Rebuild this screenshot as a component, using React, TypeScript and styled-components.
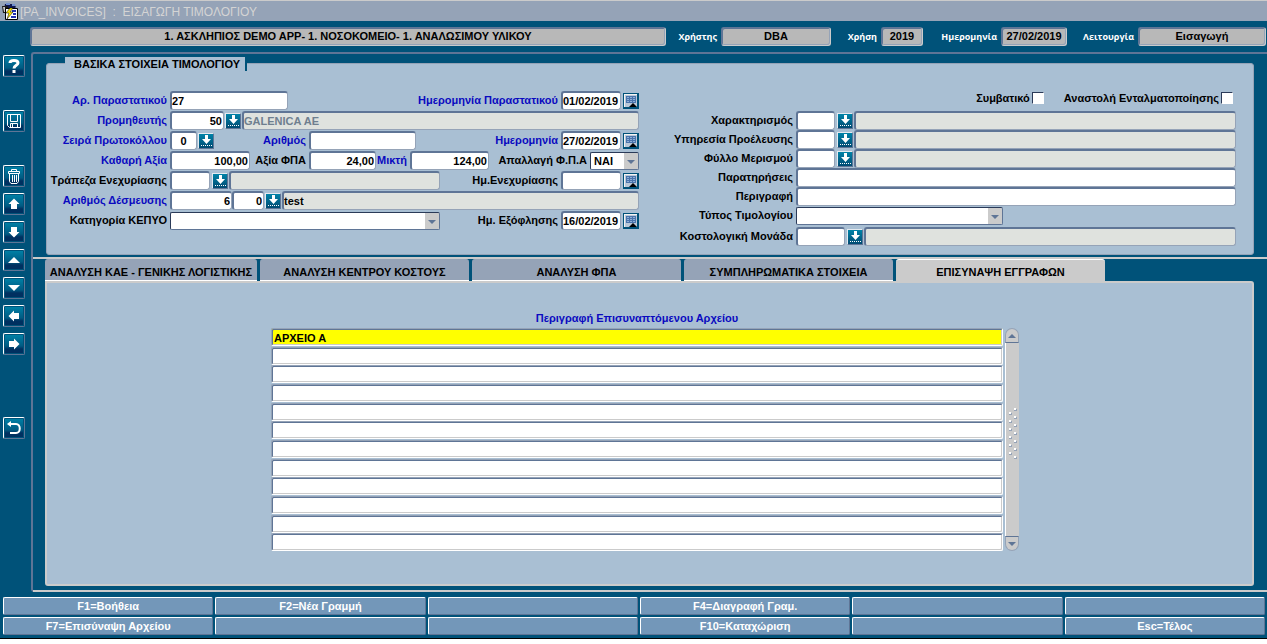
import React from "react";
import styled, { createGlobalStyle, css } from "styled-components";

const c = {
  teal: "#005279",
  panel: "#a9bfd3",
  slate: "#95a3b7",
  edge: "#5f7596",
  light: "#cbcbcb",
  readonly: "#dfe2de",
  blue: "#0a0ac0",
  footer: "#7397b9",
};

const Global = createGlobalStyle`
  * { box-sizing: border-box; }
  body { margin: 0; background: #fff; font: bold 11px/14px "Liberation Sans", Arial, sans-serif; color: #000; }
  button, input, select { font: inherit; color: inherit; margin: 0; border-radius: 0; }
  h1, h2 { margin: 0; }
`;

const Page = styled.div`
  display: flex;
  flex-direction: column;
  min-width: 1100px;
  background: ${c.teal};
  border-bottom: 1px solid #000;
`;

const TitleBar = styled.header`
  display: flex;
  align-items: center;
  gap: 1px;
  height: 21px;
  padding-left: 2px;
  background: ${c.slate};
  border-top: 1px solid ${c.light};
`;

const Title = styled.h1`
  font-size: 12px;
  font-weight: normal;
  line-height: 18px;
  padding-top: 1px;
  color: #d4d4d4;
  white-space: pre;
`;

const InfoBar = styled.div`
  display: flex;
  align-items: center;
  height: 31px;
  padding: 0 1px 0 30px;
`;

const InfoLabel = styled.label<{ $w: number }>`
  flex: 0 0 ${(p) => p.$w}px;
  padding-right: 4px;
  text-align: right;
  color: #fff;
  font: bold 9px/14px "Open Sans", "Noto Sans", sans-serif;
`;

const InfoField = styled.input<{ $w?: number }>`
  ${(p) => (p.$w ? css`flex: 0 0 ${p.$w}px;` : css`flex: 1;`)}
  min-width: 0;
  height: 19px;
  padding: 0 0 1px;
  text-align: center;
  background: #b8b8b8;
  border: 1px solid;
  border-color: ${c.edge} ${c.light} ${c.light} ${c.edge};
  box-shadow: inset 1px 1px ${c.edge}, inset -1px -1px ${c.slate};
  border-radius: 3px;
`;

const Body = styled.div`
  display: flex;
`;

const Sidebar = styled.nav`
  display: flex;
  flex-direction: column;
  gap: 6px;
  flex: 0 0 31px;
  padding: 3px 0 0 3px;
`;

const SideGap = styled.div<{ $h: number }>`
  height: ${(p) => p.$h}px;
`;

const ToolButton = styled.button`
  display: flex;
  align-items: center;
  justify-content: center;
  width: 22px;
  height: 22px;
  padding: 0;
  border: 1px solid;
  border-color: #fff ${c.edge} ${c.edge} #fff;
  border-radius: 2px;
  background: linear-gradient(#0083a8, #005a82 60%, #003060 75%, #003060);
  box-shadow: inset 0 0 0 1px ${c.teal};
`;

const Work = styled.main`
  flex: 1;
  min-width: 0;
  border-left: 2px solid ${c.edge};
  border-top: 2px solid ${c.edge};
  border-radius: 3px 0 0 3px;
`;

const HeadSection = styled.section`
  padding: 3px 13px 2px 13px;
`;

const Group = styled.div`
  background: ${c.panel};
  border: 1px solid ${c.slate};
  border-radius: 3px;
  margin-top: 6px;
  padding-bottom: 8px;
`;

const Legend = styled.h2`
  width: 182px;
  height: 14px;
  margin: -7px 0 20px 18px;
  padding-left: 9px;
  background: ${c.panel};
  border-right: 2px solid ${c.teal};
  font-size: 11px;
  line-height: 15px;
  white-space: nowrap;
`;

const Columns = styled.div`
  display: flex;
  padding-right: 17px;
`;

const LeftColumn = styled.div`
  display: flex;
  flex-direction: column;
  gap: 1px;
  flex: 0 0 592px;
`;

const RightColumn = styled.div`
  display: flex;
  flex-direction: column;
  flex: 1;
  min-width: 0;
`;

const Row = styled.div<{ $top?: number }>`
  display: flex;
  align-items: center;
  height: 19px;
  margin-top: ${(p) => p.$top ?? 0}px;
`;

const Checks = styled.div`
  display: flex;
  align-items: center;
  justify-content: flex-end;
  height: 20px;
  padding: 0 3px 6px 0;
`;

const Label = styled.label<{ $w?: number; $blue?: boolean }>`
  ${(p) => (p.$w ? css`flex: 0 0 ${p.$w}px;` : css`flex: 1;`)}
  padding-right: 3px;
  text-align: right;
  white-space: nowrap;
  line-height: 19px;
  color: ${(p) => (p.$blue ? c.blue : "#000")};
`;

const CheckLabel = styled.label`
  display: flex;
  align-items: center;
  gap: 2px;
  margin-left: 20px;
`;

const Check = styled.input`
  appearance: none;
  width: 12px;
  height: 12px;
  background: #fff;
  border: 1px solid;
  border-color: #2a3a58 #fff #fff #2a3a58;
`;

const Field = styled.input<{ $w?: number; $align?: string; $muted?: boolean }>`
  ${(p) => (p.$w ? css`flex: 0 0 ${p.$w}px;` : css`flex: 1;`)}
  min-width: 0;
  width: 0;
  height: 19px;
  padding: 0 1px 0 0;
  background: #fff;
  border: solid;
  border-width: 2px 1px 1px 2px;
  border-color: ${c.edge} ${c.slate} ${c.slate} ${c.edge};
  border-radius: 3px;
  text-align: ${(p) => p.$align ?? "left"};
  color: ${(p) => (p.$muted ? "#6f7f8f" : "#000")};
  &:read-only { background: ${c.readonly}; }
`;

const PickButton = styled.button<{ $gap?: number }>`
  display: flex;
  align-items: center;
  justify-content: center;
  flex: 0 0 16px;
  height: 16px;
  margin: 0 1px 0 ${(p) => p.$gap ?? 0}px;
  padding: 0;
  border: 1px solid;
  border-color: #e4eaf0 ${c.edge} ${c.edge} #e4eaf0;
  background: linear-gradient(#0083a8, #004a72);
`;

const DateButton = styled.button`
  display: flex;
  flex: 0 0 16px;
  height: 16px;
  margin-left: 2px;
  padding: 0;
  border: 0;
  background: none;
`;

const SelectBox = styled.span<{ $w: number }>`
  position: relative;
  flex: 0 0 ${(p) => p.$w}px;
  height: 18px;
`;

const Select = styled.select`
  appearance: none;
  display: block;
  width: 100%;
  height: 18px;
  padding: 1px 16px 0 3px;
  background: linear-gradient(${c.light}, ${c.light}) right / 14px 100% no-repeat #fff;
  border: 1px solid;
  border-color: #2a3a58 ${c.edge} ${c.edge} #2a3a58;
  border-radius: 2px;
`;

const SelectArrow = styled.i`
  position: absolute;
  right: 4px;
  top: 8px;
  border: solid transparent;
  border-width: 4px 4px 0;
  border-top-color: ${c.edge};
  pointer-events: none;
`;

const TabSection = styled.section`
  border-top: 2px solid;
  border-bottom: 2px solid;
  border-image: linear-gradient(${c.light}, ${c.light}) 1;
  padding: 0 13px 4px 12px;
`;

const Tabs = styled.div`
  display: flex;
  gap: 3px;
`;

const Tab = styled.button<{ $active?: boolean }>`
  flex: 0 0 209px;
  height: 22px;
  padding: 3px 0 0;
  border: 0;
  white-space: nowrap;
  background: ${(p) => (p.$active ? c.light : c.slate)};
  border-bottom: 1px solid ${(p) => (p.$active ? c.light : "#fff")};
  border-top: 1px solid ${(p) => (p.$active ? "#fff" : c.slate)};
  border-radius: 3px 3px 0 0;
  &:first-child { flex-basis: 212px; }
`;

const TabPanel = styled.div`
  display: flex;
  padding: 26px 233px 32px 224px;
  background: ${c.panel};
  border: 2px solid ${c.light};
  border-radius: 0 3px 3px 3px;
`;

const FileTable = styled.table`
  display: block;
  flex: 1;
  min-width: 0;
  & thead, & tr, & th, & td { display: block; padding: 0; }
`;

const FileHead = styled.th`
  height: 19px;
  line-height: 18px;
  color: ${c.blue};
`;

const FileRows = styled.tbody`
  display: grid;
  grid-template-rows: repeat(12, 1fr);
  height: 224px;
`;

const FileInput = styled.input<{ $current: boolean }>`
  display: block;
  width: 100%;
  height: 18px;
  padding: 1px 0 0 2px;
  background: ${(p) => (p.$current ? "#ffff00" : "#fff")};
  border: 1px solid;
  border-color: ${c.slate} #fff #fff ${c.slate};
  box-shadow: inset 1px 1px ${c.edge}, inset -1px -1px ${c.light};
  border-radius: 2px;
`;

const ScrollBar = styled.div`
  display: flex;
  flex-direction: column;
  flex: 0 0 14px;
  height: 223px;
  margin: 19px 0 0 2px;
`;

const ScrollButton = styled.button<{ $end?: boolean }>`
  height: 15px;
  padding: 0;
  display: flex;
  align-items: center;
  justify-content: center;
  background: ${c.light};
  border: 1px solid ${c.slate};
  ${(p) => (p.$end ? "border-top-color" : "border-bottom-color")}: ${c.edge};
  border-radius: ${(p) => (p.$end ? "0 0 7px 7px" : "7px 7px 0 0")};
`;

const ScrollTrack = styled.div`
  flex: 1;
  display: flex;
  align-items: center;
  justify-content: center;
  background: ${c.light};
  border-left: 1px solid #fff;
  padding-bottom: 11px;
`;

const Footer = styled.footer`
  display: grid;
  grid-template-columns: repeat(5, 21fr) 20fr;
  grid-auto-rows: 18px;
  gap: 2px;
  padding: 5px 2px 3px 3px;
`;

const KeyButton = styled.button`
  min-width: 0;
  padding: 0;
  color: #fff;
  background: ${c.footer};
  border: 1px solid;
  border-color: #fff ${c.edge} ${c.edge} #fff;
  border-radius: 2px;
`;

const Arrow = ({ turn = 0 }: { turn?: number }) => (
  <svg width="12" height="12" viewBox="0 0 12 12" fill="#fff" transform={`rotate(${turn})`}>
    <path d="M6 0.500 11.500 6H9V11H3V6H0.500Z" />
  </svg>
);

const Triangle = ({ down = false, color = "#fff", w = 12 }: { down?: boolean; color?: string; w?: number }) => (
  <svg width={w} height={w / 2} viewBox="0 0 12 6" fill={color}>
    <path d={down ? "M0 0H12L6 6Z" : "M0 6H12L6 0Z"} />
  </svg>
);

const Pick = ({ gap }: { gap?: number }) => (
  <PickButton type="button" aria-label="Λίστα" $gap={gap}>
    <svg width="12" height="12" viewBox="0 0 12 12" fill="#fff">
      <path d="M5 0H8V4H11L6.500 9 2 4H5Z" />
      <path d="M1 10.500H12" stroke="#fff" strokeDasharray="1 1" />
    </svg>
  </PickButton>
);

const Calendar = () => (
  <DateButton type="button" aria-label="Ημερολόγιο">
    <svg width="16" height="16" viewBox="0 0 16 16">
      <path fill={c.teal} d="M0 0H16V16H0Z" />
      <path fill="#b9c8d8" d="M1 1H14V14H1Z" />
      <path fill="#f4f4f4" d="M1 1H14V2H2V14H1Z" />
      <path fill="#4a74ac" d="M3 3H13V10H3Z" />
      <path stroke="#8fb0d8" strokeDasharray="2 1" d="M4 4.500H12M4 6.500H12M4 8.500H12" />
      <path fill="#000" d="M6 14H14L10 10Z" />
    </svg>
  </DateButton>
);

const tabs = ["ΑΝΑΛΥΣΗ ΚΑΕ - ΓΕΝΙΚΗΣ ΛΟΓΙΣΤΙΚΗΣ", "ΑΝΑΛΥΣΗ ΚΕΝΤΡΟΥ ΚΟΣΤΟΥΣ", "ΑΝΑΛΥΣΗ ΦΠΑ", "ΣΥΜΠΛΗΡΩΜΑΤΙΚΑ ΣΤΟΙΧΕΙΑ", "ΕΠΙΣΥΝΑΨΗ ΕΓΓΡΑΦΩΝ"];
const files = ["ΑΡΧΕΙΟ Α", "", "", "", "", "", "", "", "", "", "", ""];
const keys = ["F1=Βοήθεια", "F2=Νέα Γραμμή", "", "F4=Διαγραφή Γραμ.", "", "", "F7=Επισύναψη Αρχείου", "", "", "F10=Καταχώριση", "", "Esc=Τέλος"];
const lookups = [
  ["char", "Χαρακτηρισμός"],
  ["service", "Υπηρεσία Προέλευσης"],
  ["sheet", "Φύλλο Μερισμού"],
];

export default function App() {
  return (
    <Page>
      <Global />
      <TitleBar>
        <svg width="17" height="17" viewBox="0 0 17 17">
          <path fill="#101850" d="M3 1H12L14 4 12 6H2Z" />
          <path fill="#6f8fd0" d="M4 0H8V2H4ZM10 1H13V3H10Z" />
          <path fill="#1c1c1c" d="M0 3H6V10H1Z" />
          <path fill="#c8c8c8" d="M1 4H3V9H2Z" />
          <path fill="#fff" stroke="#000" d="M3.500 5.500H15.500V16.500H3.500Z" />
          <path stroke="#2030b0" strokeWidth="2" d="M10 8H14M11 11H14M9 14H14" />
          <path fill="#ffe800" stroke="#000" strokeWidth=".5" d="M8 5 4 10H7L5 16 11 9H8L11 5Z" />
        </svg>
        <Title>{"[PA_INVOICES]  :  ΕΙΣΑΓΩΓΗ ΤΙΜΟΛΟΓΙΟΥ"}</Title>
      </TitleBar>
      <InfoBar>
        <InfoField aria-label="Μονάδα" readOnly defaultValue="1. ΑΣΚΛΗΠΙΟΣ DEMO APP- 1. ΝΟΣΟΚΟΜΕΙΟ- 1. ΑΝΑΛΩΣΙΜΟΥ ΥΛΙΚΟΥ" />
        <InfoLabel $w={55} htmlFor="user">Χρήστης</InfoLabel>
        <InfoField $w={110} id="user" readOnly defaultValue="DBA" />
        <InfoLabel $w={50} htmlFor="year">Χρήση</InfoLabel>
        <InfoField $w={42} id="year" readOnly defaultValue="2019" />
        <InfoLabel $w={78} htmlFor="today">Ημερομηνία</InfoLabel>
        <InfoField $w={66} id="today" readOnly defaultValue="27/02/2019" />
        <InfoLabel $w={71} htmlFor="mode">Λειτουργία</InfoLabel>
        <InfoField $w={128} id="mode" readOnly defaultValue="Εισαγωγή" />
      </InfoBar>
      <Body>
        <Sidebar>
          <ToolButton aria-label="Βοήθεια">
            <svg width="16" height="16" viewBox="0 0 16 16" fill="none" stroke="#fff" strokeWidth="3">
              <path d="M4 5C4 1.500 12 1.500 12 5C12 7.500 8 7 8 10.500M8 12V15" />
            </svg>
          </ToolButton>
          <SideGap $h={21} />
          <ToolButton aria-label="Αποθήκευση">
            <svg width="16" height="16" viewBox="0 0 16 16" fill="none" stroke="#fff">
              <path d="M1.500 1.500H14.500V14.500H3.500L1.500 12.500ZM4.500 1.500V8.500H11.500V1.500M4.500 14.500V10.500H11.500V14.500M6.500 11V14" />
            </svg>
          </ToolButton>
          <SideGap $h={21} />
          <ToolButton aria-label="Διαγραφή">
            <svg width="16" height="16" viewBox="0 0 16 16" fill="none" stroke="#fff">
              <path d="M3.500 5.500V13.500L5 15.500H11L12.500 13.500V5.500M2.500 5.500V3.500H13.500V5.500ZM5.500 3V1.500H10.500V3M6.500 7V14M8.500 7V14M10.500 7V14" />
            </svg>
          </ToolButton>
          <ToolButton aria-label="Πάνω"><Arrow /></ToolButton>
          <ToolButton aria-label="Κάτω"><Arrow turn={180} /></ToolButton>
          <ToolButton aria-label="Προηγούμενη σελίδα"><Triangle /></ToolButton>
          <ToolButton aria-label="Επόμενη σελίδα"><Triangle down /></ToolButton>
          <ToolButton aria-label="Αριστερά"><Arrow turn={270} /></ToolButton>
          <ToolButton aria-label="Δεξιά"><Arrow turn={90} /></ToolButton>
          <SideGap $h={50} />
          <ToolButton aria-label="Επιστροφή">
            <svg width="16" height="16" viewBox="0 0 16 16" fill="none" stroke="#fff" strokeWidth="2">
              <path d="M4 4H10C15 4 15 13 10 13H4" />
              <path fill="#fff" stroke="none" d="M1 4 5 1V7Z" />
            </svg>
          </ToolButton>
        </Sidebar>
        <Work>
          <HeadSection>
            <Group>
              <Legend>ΒΑΣΙΚΑ ΣΤΟΙΧΕΙΑ ΤΙΜΟΛΟΓΙΟΥ</Legend>
              <Columns>
                <LeftColumn>
                  <Row>
                    <Label $w={123} $blue htmlFor="doc">Αρ. Παραστατικού</Label>
                    <Field $w={118} id="doc" defaultValue="27" />
                    <Label $blue htmlFor="docDate">Ημερομηνία Παραστατικού</Label>
                    <Field $w={60} id="docDate" defaultValue="01/02/2019" />
                    <Calendar />
                  </Row>
                  <Row>
                    <Label $w={123} $blue htmlFor="supplier">Προμηθευτής</Label>
                    <Field $w={54} $align="right" id="supplier" defaultValue="50" />
                    <Pick gap={1} />
                    <Field aria-label="Επωνυμία" $muted readOnly defaultValue="GALENICA AE" />
                  </Row>
                  <Row>
                    <Label $w={123} $blue htmlFor="series">Σειρά Πρωτοκόλλου</Label>
                    <Field $w={27} $align="center" id="series" defaultValue="0" />
                    <Pick gap={1} />
                    <Label $w={94} $blue htmlFor="number">Αριθμός</Label>
                    <Field $w={107} id="number" />
                    <Label $blue htmlFor="date">Ημερομηνία</Label>
                    <Field $w={60} id="date" defaultValue="27/02/2019" />
                    <Calendar />
                  </Row>
                  <Row>
                    <Label $w={123} $blue htmlFor="net">Καθαρή Αξία</Label>
                    <Field $w={80} $align="right" id="net" defaultValue="100,00" />
                    <Label $w={59} htmlFor="vat">Αξία ΦΠΑ</Label>
                    <Field $w={67} $align="right" id="vat" defaultValue="24,00" />
                    <Label $w={34} $blue htmlFor="gross">Μικτή</Label>
                    <Field $w={79} $align="right" id="gross" defaultValue="124,00" />
                    <Label htmlFor="exempt">Απαλλαγή Φ.Π.Α</Label>
                    <SelectBox $w={49}>
                      <Select id="exempt"><option>ΝΑΙ</option></Select>
                      <SelectArrow />
                    </SelectBox>
                  </Row>
                  <Row>
                    <Label $w={123} htmlFor="bank">Τράπεζα Ενεχυρίασης</Label>
                    <Field $w={40} id="bank" />
                    <Pick gap={2} />
                    <Field $w={211} aria-label="Όνομα τράπεζας" readOnly />
                    <Label htmlFor="pledge">Ημ.Ενεχυρίασης</Label>
                    <Field $w={60} id="pledge" />
                    <Calendar />
                  </Row>
                  <Row>
                    <Label $w={123} $blue htmlFor="commit">Αριθμός Δέσμευσης</Label>
                    <Field $w={62} $align="right" id="commit" defaultValue="6" />
                    <Field $w={32} $align="right" aria-label="Υποαριθμός" defaultValue="0" />
                    <Pick gap={1} />
                    <Field aria-label="Περιγραφή δέσμευσης" readOnly defaultValue="test" />
                  </Row>
                  <Row>
                    <Label $w={123} htmlFor="kepyo">Κατηγορία ΚΕΠΥΟ</Label>
                    <SelectBox $w={270}>
                      <Select id="kepyo"><option></option></Select>
                      <SelectArrow />
                    </SelectBox>
                    <Label htmlFor="payDate">Ημ. Εξόφλησης</Label>
                    <Field $w={60} id="payDate" defaultValue="16/02/2019" />
                    <Calendar />
                  </Row>
                </LeftColumn>
                <RightColumn>
                  <Checks>
                    <CheckLabel>Συμβατικό<Check type="checkbox" /></CheckLabel>
                    <CheckLabel>Αναστολή Ενταλματοποίησης<Check type="checkbox" /></CheckLabel>
                  </Checks>
                  {lookups.map(([id, label]) => (
                    <Row key={id}>
                      <Label $w={157} htmlFor={id}>{label}</Label>
                      <Field $w={39} id={id} />
                      <Pick gap={2} />
                      <Field aria-label={`${label} περιγραφή`} readOnly />
                    </Row>
                  ))}
                  <Row>
                    <Label $w={157} htmlFor="notes">Παρατηρήσεις</Label>
                    <Field id="notes" />
                  </Row>
                  <Row>
                    <Label $w={157} htmlFor="desc">Περιγραφή</Label>
                    <Field id="desc" />
                  </Row>
                  <Row>
                    <Label $w={157} htmlFor="type">Τύπος Τιμολογίου</Label>
                    <SelectBox $w={207}>
                      <Select id="type"><option></option></Select>
                      <SelectArrow />
                    </SelectBox>
                  </Row>
                  <Row $top={2}>
                    <Label $w={157} htmlFor="cost">Κοστολογική Μονάδα</Label>
                    <Field $w={49} id="cost" />
                    <Pick gap={2} />
                    <Field aria-label="Κοστολογική Μονάδα περιγραφή" readOnly />
                  </Row>
                </RightColumn>
              </Columns>
            </Group>
          </HeadSection>
          <TabSection>
            <Tabs role="tablist">
              {tabs.map((t, i) => (
                <Tab key={t} role="tab" aria-selected={i === 4} $active={i === 4}>{t}</Tab>
              ))}
            </Tabs>
            <TabPanel role="tabpanel">
              <FileTable>
                <thead><tr><FileHead scope="col">Περιγραφή Επισυναπτόμενου Αρχείου</FileHead></tr></thead>
                <FileRows>
                  {files.map((f, i) => (
                    <tr key={i}>
                      <td><FileInput aria-label={`Αρχείο ${i + 1}`} $current={i === 0} defaultValue={f} /></td>
                    </tr>
                  ))}
                </FileRows>
              </FileTable>
              <ScrollBar>
                <ScrollButton aria-label="Κύλιση πάνω"><Triangle w={8} color={c.edge} /></ScrollButton>
                <ScrollTrack>
                  <svg width="9" height="52" viewBox="0 0 9 52">
                    {[0, 1, 2, 3, 4, 5, 6].map((n) => (
                      <g key={n}>
                        <path fill={c.slate} d={`M6 ${n * 8 + 1}h3v2h-3z`} />
                        <path fill="#fff" d={`M6 ${n * 8}h2v2h-2z`} />
                        {n < 6 && <path fill={c.slate} d={`M1 ${n * 8 + 5}h3v2h-3z`} />}
                        {n < 6 && <path fill="#fff" d={`M1 ${n * 8 + 4}h2v2h-2z`} />}
                      </g>
                    ))}
                  </svg>
                </ScrollTrack>
                <ScrollButton $end aria-label="Κύλιση κάτω"><Triangle w={8} down color={c.edge} /></ScrollButton>
              </ScrollBar>
            </TabPanel>
          </TabSection>
        </Work>
      </Body>
      <Footer>
        {keys.map((k, i) => (
          <KeyButton key={i}>{k}</KeyButton>
        ))}
      </Footer>
    </Page>
  );
}
